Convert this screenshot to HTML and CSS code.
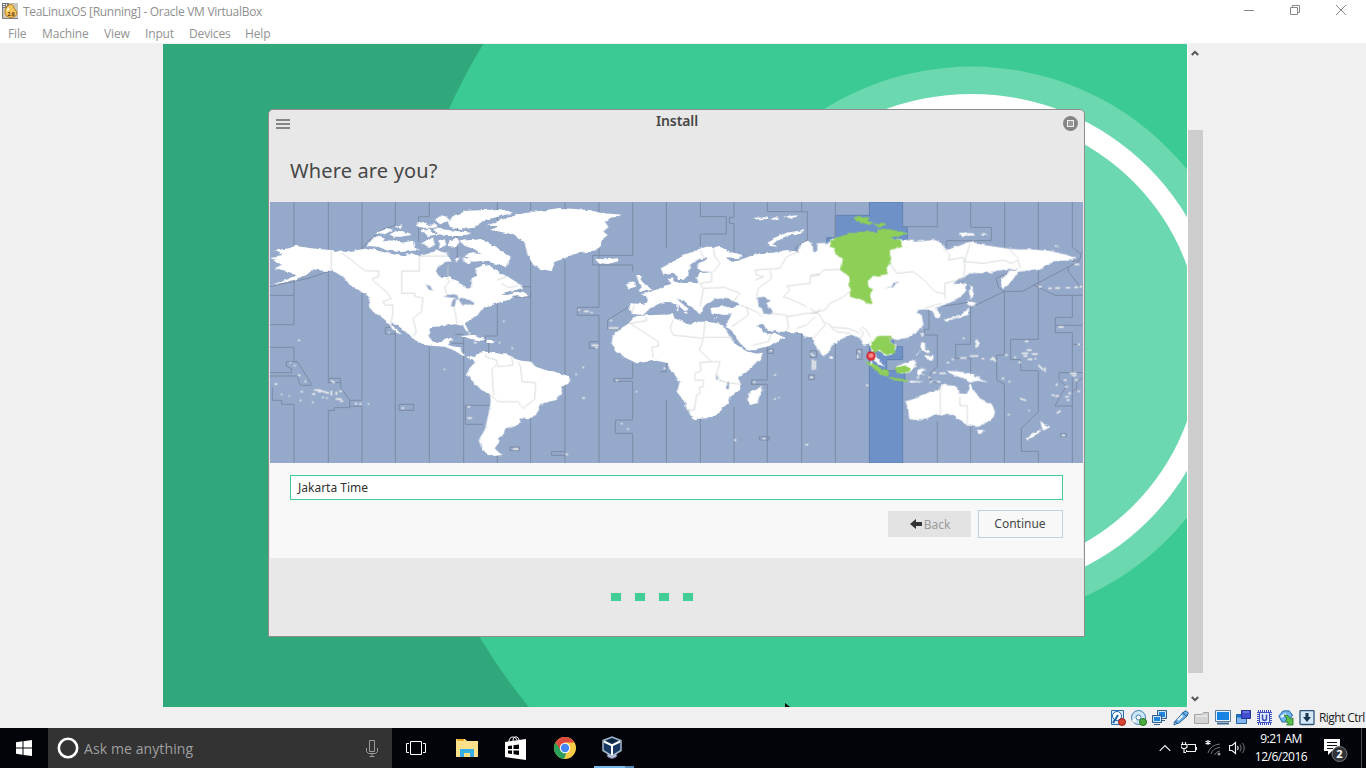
FILE: index.html
```html
<!DOCTYPE html>
<html lang="en">
<head>
<meta charset="utf-8">
<title>TeaLinuxOS [Running] - Oracle VM VirtualBox</title>
<link rel="stylesheet" href="styles.css">
</head>
<body>
<header class="titlebar">
  <svg class="app-icon" width="16" height="16" viewBox="0 0 16 16"><rect width="16" height="16" fill="#c9c6bd"/><path d="M0 0H7V5H0Z" fill="#777"/><path d="M1 1h2v1H1zM4 1h1v2H4zM1 3h2v1H1z" fill="#eee"/><path d="M3 9Q3 4 7 2Q11 0 12 5Q15 8 15 11Q14 14 9 14.500Q3 14 3 9Z" fill="#f6c65c" stroke="#b98222"/><path d="M5 8L7 5" stroke="#fff3bd" stroke-width="2"/><path d="M.5 5V15.500H16" fill="none" stroke="#807b70"/><text x="5.500" y="12.500" class="app-ver">2.6</text></svg>
  <span class="title-text">TeaLinuxOS [Running] - Oracle VM VirtualBox</span>
  <div class="caption">
    <svg width="12" height="12"><path d="M1 6.500H11" /></svg>
    <svg width="12" height="12"><path d="M1.500 3.500H8.500V10.500H1.500ZM3.500 3.500V1.500H10.500V8.500H8.500"/></svg>
    <svg width="12" height="12"><path d="M1 1L11 11M11 1L1 11"/></svg>
  </div>
</header>
<nav class="menubar"><span class="m-file">File</span><span class="m-machine">Machine</span><span class="m-view">View</span><span class="m-input">Input</span><span class="m-devices">Devices</span><span class="m-help">Help</span></nav>
<main class="viewport">
  <section class="desktop">
    <svg class="wallpaper" width="1024" height="663"><rect width="1024" height="663" fill="#30a87c"/><circle cx="807" cy="299.600" r="571.500" fill="#3bca94"/><circle cx="808.500" cy="299.600" r="277" fill="#6bd8af"/><circle cx="808.500" cy="300" r="250" fill="#fff"/><circle cx="808.500" cy="299.600" r="229" fill="#6bd8af"/></svg>
    <section class="installer">
      <div class="win-head">
        <svg width="14" height="11"><path d="M0 1H14M0 5H14M0 9H14" stroke="#858585" stroke-width="2"/></svg>
        <span class="win-title">Install</span>
        <svg width="15" height="15"><circle cx="7.500" cy="7.500" r="7.500" fill="#858585"/><rect x="4.500" y="4.500" width="6" height="6" fill="#999" stroke="#f0f0f0"/></svg>
      </div>
      <h1 class="question">Where are you?</h1>
      <svg class="map" width="813" height="261" viewBox="6 6 2439 783" preserveAspectRatio="none">
        <defs>
          <filter id="coast" x="-5%" y="-5%" width="110%" height="110%"><feTurbulence type="fractalNoise" baseFrequency="0.055" numOctaves="2" seed="4"/><feDisplacementMap in="SourceGraphic" scale="11" xChannelSelector="R" yChannelSelector="G"/></filter>
        </defs>
        <rect width="2450" height="795" fill="#95a9ca"/>
        <!-- highlighted time zone -->
        <g transform="translate(1626)" fill="#6e92c8" stroke="#5473a6" stroke-width="2"><path d="M76 46H178V6H278V80H292V115L240 200H90L50 128V113H76ZM178 410H250V430L258 440H278V479H230V512H258V498H285V540H278V789H178Z"/></g>
        <!-- zone boundaries -->
        <g class="zones">
          <path d="M78 6V286H6M6 374H78V286M6 442H78V485M55 485H88L128 548V556H97L88 528H6M6 518H71V506L55 499V485M13 562V601H41V613H78V789M181 6V535H218V562L245 601V623H199V631H181V789M181 535V548H218M282 6V601H245M245 619H282V789M382 6V75L340 90 300 125 282 145M382 382V789M382 382H352V402H382M393 613H437V631H393ZM484 6V50H452V125M484 440V789M562 403H587V430H550M587 430V789M688 6V90M688 220V408H652V425L662 430V460M688 765V789M788 6V262M788 275V485M788 650V789M668 616H592V673H645M726 741H755V752H726ZM568 38V175M6 260L120 235 181 215M760 260H788V291H740"/>
          <g transform="translate(816)"><path d="M75 6V175M75 180V789M177 6V322H112V346H177V789M148 425H177M148 425V445H177M278 6V166H158V195H278V215M270 318L203 360V387H240M278 390V485M278 490V535H221V544H278V660H226V700H278V789M75 755H35V766H75M379 6V145M379 250V300M379 485V515H361M379 600V789M481 6V50H559V102H481V140M481 655V789M582 6V52H568V70H582V160M582 620V789M682 6V35H802V120L768 140V155M682 430V460M700 447H682V460H700ZM682 455V540H634V553H682V789M658 710H688V720H658ZM785 6V35M785 395V789M811 452H830V472H811ZM806 525H823V539H806Z"/></g>
          <g transform="translate(1626)"><path d="M76 6V115M76 430V789M140 448H156V478H140ZM278 80H382V6M482 6V82H544V122H410V140M584 6V145M685 6V150M787 6V142L812 162V175L787 185M775 200V215L808 257V262M810 162L817 155M810 182L637 274H583L482 323V433H437V475H482V515M583 274V465H560V540L583 552V789M625 205L558 235 565 262 583 274M670 255L735 286H817M787 286V352H736V398H787V789M736 376H817M787 433H817M685 200V418H602V479H632V512H685V635L634 685V754H685V789M747 518H817M747 518V540L770 560 755 580 735 618H787M817 535L800 545V565L787 575M482 323V305L445 312 400 318M357 330V388H344V405H382V500L360 520V540L382 550M382 665V789M482 675V789M752 701H769V710H752Z"/></g>
        </g>
        <!-- land masses -->
        <g class="land" filter="url(#coast)">
          <path d="M16 152L50 147 85 138 130 145 160 148 190 150 222 156 270 150 300 145 330 152 360 160 400 167 430 160 455 168 485 160 510 150 530 158 545 170 550 185 530 185 510 200 503 215 515 230 545 232 570 245 600 266 612 260 610 235 625 228 622 205 650 195 680 205 700 222 712 225 735 240 760 255 765 265 740 270 715 275 700 282 720 285 740 275 765 278 782 288 760 292 735 285 730 296 700 305 680 312 660 318 640 330 625 350 598 365 592 375 602 392 596 395 585 378 560 373 530 378 500 380 485 388 482 405 490 420 505 428 525 425 530 415 550 413 552 420 540 435 560 440 578 442 580 455 592 470 610 468 624 474 605 476 580 465 560 452 530 440 500 438 470 435 440 420 430 410 400 385 370 366 372 375 402 404 385 398 370 380 358 365 345 355 315 335 303 320 305 295 300 285 275 270 250 258 230 235 205 218 190 212 165 212 135 208 115 225 90 235 60 245 12 254 60 238 85 222 55 215 45 210 20 205 40 195 15 180 30 175 50 172 12 178 10 170 45 165Z"/>
          <path d="M296 138L320 108 350 115 345 125 370 118 400 128 435 122 440 145 455 150 400 156 360 152 330 140ZM325 98L360 85 375 90 350 103ZM365 103L385 92 410 95 432 104 400 110 375 110ZM378 80L402 73 400 83ZM440 72L470 65 480 75 505 72 508 82 470 84ZM455 95L485 85 490 98 520 102 480 108ZM460 130L495 112 500 130 480 145ZM500 85L540 90 610 98 590 108 530 108 505 98ZM495 58L535 48 545 62 520 70ZM560 45L600 32 700 28 735 38 690 50 650 60 620 80 570 85 540 70ZM540 65L560 60 600 75 580 90 545 80ZM545 120L565 115 575 125 565 140 540 138ZM575 122L640 118 690 145 728 170 722 185 712 200 685 192 650 182 615 185 590 165 615 160 640 162 620 148 590 138ZM510 125L530 118 535 135 515 145ZM585 172L615 180 605 192 580 190ZM560 178L573 172 572 188ZM575 408L610 405 652 418 640 422 600 415ZM655 422L680 424 675 430 655 428ZM230 225L260 245 300 278 280 275 240 248Z"/>
          <path d="M620 472L628 460 655 455 680 458 700 462 730 465 745 478 760 482 790 485 803 500 840 512 856 514 901 528 908 540 896 552 882 560 880 580 866 600 841 605 816 616 810 635 795 650 780 658 758 655 760 668 735 682 710 690 705 705 690 715 695 725 680 745 700 765 680 768 655 760 640 745 632 720 650 690 655 670 662 640 668 600 665 582 640 570 620 550 600 530 595 518 610 500 622 485 610 475Z"/>
          <g transform="translate(816)">
            <path d="M-160 78L-120 60 -60 42 0 32 60 24 150 30 180 38 245 44 210 55 195 65 205 80 190 95 203 105 185 120 180 140 170 150 130 158 100 162 75 175 45 185 35 214 0 206 -20 195 -35 170 -48 125 -80 103 -150 90 -120 78ZM165 176L200 178 232 175 235 183 205 192 180 190Z"/>
            <path d="M270 310L310 312 325 305 320 292 300 283 318 280 340 272 365 262 390 252 385 235 400 232 400 245 425 250 455 248 475 250 470 232 480 220 518 216 480 214 472 205 475 190 500 180 495 175 475 178 450 198 445 225 430 240 415 240 400 218 370 222 362 205 400 185 430 165 465 150 500 140 540 140 570 155 608 165 600 175 560 172 575 188 600 180 625 170 660 160 700 158 740 150 775 155 785 130 805 122 818 140 812 160 860 150V450L840 440 825 425 818 410 805 412 785 400 750 396 715 395 685 390 665 372 650 375 685 405 700 400 735 410 715 425 680 440 625 452 600 430 575 395 550 375 560 380 565 355 575 342 555 345 515 340 512 325 530 320 550 318 580 320 600 318 585 305 555 295 530 298 515 305 495 315 488 325 480 345 470 330 450 318 430 300 412 298 425 310 445 325 440 335 415 318 385 305 360 310 330 325 310 345 275 342 268 330Z"/>
            <path d="M290 348L340 345 400 343 402 355 430 365 450 375 465 365 500 365 545 372 560 395 590 435 622 455 640 462 672 458 665 475 630 505 598 530 600 570 568 590 565 605 550 620 535 640 500 655 458 658 440 625 430 600 410 575 420 545 400 520 388 510 385 490 350 482 320 485 290 490 250 470 225 450 215 430 218 405 245 385 270 365 285 350ZM665 558L668 572 650 610 630 615 622 600 630 580ZM288 226L305 228 302 240 328 260 338 265 325 272 295 272 305 262 298 250ZM262 252L285 245 288 260 265 266ZM680 130L700 115 740 98 790 90 792 96 740 108 710 122 700 132 712 140 690 138ZM640 53L680 52 685 57 650 58ZM690 58L705 52 720 54 705 59ZM730 50L770 46 770 51 740 55ZM432 337L445 335 440 342ZM410 318L415 318 415 330 408 330ZM520 352L535 350 528 355Z"/>
          </g>
          <g transform="translate(1626)">
            <path d="M-20 125L5 128 10 155 18 158 20 130 55 128 65 120 100 115 280 118 320 125 375 120 390 128 410 150 440 140 480 125 520 135 590 145 620 148 660 148 720 153 770 165 800 175 780 182 740 182 715 195 690 205 655 212 625 215 600 250 578 268 570 240 600 212 625 205 580 208 540 218 480 220 440 240 430 252 470 250 468 275 440 300 400 315 375 325 392 340 390 352 375 350 365 330 345 328 325 330 320 340 335 345 340 375 325 395 295 412 265 420 245 415 238 422 258 440 250 462 232 467 215 458 200 450 190 445 192 460 215 490 222 500 205 495 190 475 182 440 178 430 160 435 150 415 130 405 110 408 85 425 60 440 55 460 42 470 25 450 12 430 5 410 -20 410Z"/>
            <path d="M480 252L492 280 485 300 478 280ZM470 303L500 308 480 320ZM478 322L475 345 445 352 410 365 400 358 440 350 465 335ZM335 398L343 400 335 412ZM330 430L345 430 345 448 360 452 355 460 335 450ZM345 468L370 465 370 478 350 478ZM318 465L335 450 320 468ZM258 500L280 490 315 478 318 490 300 520 265 518ZM322 508L350 505 332 515 348 528 335 522 325 530ZM360 545L378 540 360 550ZM300 542L345 545 300 548ZM408 512L450 515 490 522 515 540 535 548 505 542 480 548 460 535 430 525ZM498 415L508 430 500 445ZM287 605L330 590 360 575 385 568 400 555 440 558 445 580 470 582 480 552 495 575 510 595 545 612 555 635 550 655 525 672 500 678 465 672 440 655 430 645 380 645 350 655 310 660 297 655 295 630ZM500 690L522 690 510 704ZM690 662L705 674 722 680 700 692ZM695 686L680 705 655 718 648 714ZM448 98L495 100 495 106 450 108ZM510 102L536 104 520 108ZM730 136L750 136 735 141ZM60 465L70 470 68 480 58 475Z"/>
          </g>
        </g>
        <!-- green regions in the selected zone -->
        <g transform="translate(1626)" fill="#8ecf58" filter="url(#coast)"><path d="M62 120L105 105 150 95 200 96 205 85 240 88 290 98 285 105 240 112 272 120 280 140 240 150 240 190 232 200 230 222 185 232 172 245 178 260 190 265 180 285 185 305 182 313 165 305 120 290 118 230 90 210 95 180 72 155 75 145 55 140 60 130ZM130 50L180 52 170 60 195 68 175 75 140 62ZM195 72L220 68 230 74 200 80ZM180 425L210 408 240 407 243 415 238 422 258 440 255 458 232 467 210 452 192 458 185 440ZM162 480L185 488 215 508 237 515 235 530 215 525 185 500ZM235 532L295 538 292 546 240 540ZM256 502L290 496 302 510 295 518 265 520Z"/></g>
        <!-- inland waters -->
        <g fill="#95a9ca" filter="url(#coast)"><path d="M525 290L548 280 575 288 570 296 545 292ZM552 298L565 296 560 320 550 318ZM578 293L605 300 620 310 585 318 572 300ZM472 250L485 255 495 272 485 268ZM535 185L560 195 575 175 600 195 612 205 612 235 560 225 540 210Z"/><path d="M1324 314L1340 295 1360 300 1371 292 1381 300 1406 310 1396 320 1366 318 1341 322ZM1465 293L1488 290 1505 298 1495 310 1512 330 1508 343 1490 342 1476 322ZM1343 522L1353 540 1370 545 1345 540ZM1378 545H1383V566H1377ZM1848 266L1870 258 1888 240 1884 256Z"/></g>
        <!-- inland zone borders -->
        <g class="inner">
          <path d="M190 150V212M220 158L250 180 290 212 332 213V230L315 235V242L355 275 370 295 345 305 350 315H374V345L368 370M454 168V213H401V280H440V288L465 295 460 335 435 355 445 395 435 410M454 168H541V155M541 195L538 235 545 245 530 260 538 290M557 320L562 340 568 375M688 240L715 230M700 250L720 262 750 258M655 460L652 470 685 480 690 500 735 495 730 465M685 495L672 508 675 560 678 585M668 585L690 605 750 605 765 625 800 598 803 548 762 545 758 500 750 485"/>
          <path transform="translate(816)" d="M270 370L320 362 318 350M270 370L355 425V438L335 442 340 475M400 358L390 385 400 405 490 415 495 365M495 412H580M490 418L478 450 500 470 515 485H540L530 520 540 540 560 548 600 552M515 485L480 488 483 512 465 520V540H490V560L478 562 480 580 470 585 463 630H440M480 150L495 180M520 145L525 170 540 190 520 215M515 215V245L480 250 490 270 480 320M490 265L555 262 600 280 580 305M775 155L740 170 720 205 645 210 650 225 670 230 645 240M690 212L695 235 655 265 650 290M840 225L810 230V250L740 258 750 270 730 290 770 305 800 320M600 315L650 335 665 350M620 320L625 345 575 380M690 340L740 345 745 380 740 395M740 350L800 340 830 340 840 325M825 350L800 375 770 385M695 400L685 425 640 435M283 315L275 340"/>
          <path transform="translate(1626)" d="M0 225L30 222 40 210 90 208M118 275L100 290 60 310 45 330 0 340M0 325L30 345 45 375 10 415M45 365L70 382 115 385 150 400M60 380L80 395 120 400M150 385L160 400 150 420M180 410L170 390 155 380M240 190L260 220 310 215 340 238 375 275 405 282V295M400 145L420 165 415 180 460 172 465 200 460 235 405 250V280M480 130L470 165 465 185 520 190 580 180 605 190 625 180 630 205M600 150L625 175M391 560V645M450 590V617H472V675M230 410L250 420M345 325L375 315 395 310"/>
        </g>
        <!-- small islands -->
        <g class="isles">
          <path d="M90 421h6M65 488h4M78 497h5M90 526h7M110 544h5M20 552h8M97 575h8M39 583h4M62 588h4M95 601h5M132 607h5M132 582h10M190 542l10 7M138 570h20M150 575h10M158 572l25 8M190 572v14M205 575v10M214 574h8M203 597h18M216 603h9M162 592h5M174 594h5M260 611h8M274 612h6M299 612h5M401 624h7M598 620h9M598 654h14M735 747h16M705 364h5M528 508h4M617 428h10M692 428h5M600 400h8M730 445h5M360 398h5"/>
          <path transform="translate(816)" d="M114 330h6M132 334h15M152 338h6M155 436h20M165 443h9M127 502h5M106 523h5M127 594h8M228 541h6M287 575h5M242 671h6M261 687h5M210 361h6M206 384h30M77 763h7M370 505h7M690 452h7M640 546h6M702 525h6M702 597h6M715 593h4M668 716h8M582 720h7M795 734h10M811 460l12 8M818 478v32M826 482v26M810 532h9"/>
          <path transform="translate(1626)" d="M145 452l6 6M143 465v10M9 480v30M168 556h7M310 499h10M368 518h10M388 520h20M410 488h8M425 478h6M450 474h20M480 468h25M515 476h8M458 415h6M500 420v22M540 478h16M547 471l10 14M585 465h8M612 472h6M645 424h10M635 460h20M640 468h12M650 450h15M653 478h14M665 462h18M673 476h6M625 487h8M685 495l15 15M705 502v14M575 535h8M595 545h6M630 595l18 6M654 632h5M593 644h6M780 520h20M785 527h14M762 540h8M795 540h8M740 550v8M765 560h9M775 580h8M765 590h12M770 600h8M725 585h8M735 588h12M803 574h7M740 640l12-8M755 706h10M745 381h16M803 433h8M685 260h10M715 265h10M735 264h15M767 263h14M793 262h11M808 260h9M793 193h15M320 532h8M355 532h6M380 545h12"/>
        </g>
        <!-- location pin -->
        <g transform="translate(1809 468)"><path d="M1 8V25" stroke="#fff" stroke-width="4"/><circle r="12" fill="#ea3b43" stroke="#c3191f" stroke-width="3.500"/><ellipse cy="-2" rx="7.500" ry="6" fill="#f7a2a5"/><path d="M-6-2H6" stroke="#ea5a60" stroke-width="2"/></g>
      </svg>
      <div class="form">
        <div class="field">Jakarta Time</div>
        <div class="buttons">
          <div class="btn back"><svg width="12" height="10"><path d="M0 5L6 0V3H12V7H6V10Z" fill="#333"/></svg><span>Back</span></div>
          <div class="btn continue">Continue</div>
        </div>
      </div>
      <div class="dots"><i></i><i></i><i></i><i></i></div>
    </section>
    <svg class="pointer" width="5" height="5"><path d="M0 0L5 4V5H0Z"/></svg>
  </section>
  <aside class="scroll">
    <svg width="8" height="6"><path d="M.8 5L4 1.800 7.200 5" /></svg>
    <div class="thumb"></div>
    <svg width="8" height="6"><path d="M.8 1L4 4.200 7.200 1"/></svg>
  </aside>
</main>
<footer class="status">
  <svg viewBox="0 0 16 16"><path d="M1.500.500H13.500V14.500H1.500Z" fill="#d9ebfa" stroke="#2d70ae"/><circle cx="7" cy="6" r="4.500" fill="#fff" stroke="#1d66ad"/><path d="M3 13L8 5" stroke="#1d66ad" stroke-width="2"/><circle cx="12" cy="12" r="3.500" fill="#da4436" stroke="#951d17"/></svg>
  <svg viewBox="0 0 16 16"><circle cx="7.500" cy="7.500" r="7" fill="#cce5f7" stroke="#3b7eb8"/><path d="M7 7L1 10 3 13Z" fill="#fff"/><circle cx="7.500" cy="7.500" r="2.500" fill="#fff" stroke="#3b7eb8"/><circle cx="12" cy="12" r="3.500" fill="#4cae3e" stroke="#297322"/></svg>
  <svg viewBox="0 0 16 16"><path d="M5.500.500H14.500V8.500H5.500ZM8 10.500H13" fill="#1f86de" stroke="#355f8a"/><path d="M6.500 1.500H13.500V7.500H6.500Z" fill="none" stroke="#cde7fc"/><path d="M.5 5.500H9.500V12.500H.5ZM2 14.500H8" fill="#1f86de" stroke="#355f8a"/><path d="M1.500 6.500H8.500V11.500H1.500Z" fill="none" stroke="#cde7fc"/></svg>
  <svg viewBox="0 0 16 16"><path d="M1 15L1.500 11.500 4 13.500Z" fill="#d9e6f2" stroke="#245f9c"/><path d="M2.500 11L10 2.500 13 .700 15.300 3 14 6 5.500 13.500Q3 14 2.500 11Z" fill="#6eb0ea" stroke="#245f9c"/><path d="M9.500 2.500L14 6.500" stroke="#1f568f"/><path d="M5 10L9.500 5.500" stroke="#e8f5ff" stroke-width="2"/></svg>
  <svg viewBox="0 0 16 16"><path d="M.5 13.500V4.500H8L9.500 2.500H14.500V13.500Z" fill="#d3d3d3" stroke="#a4a4a4"/><path d="M2 6H13" stroke="#f5f5f5"/></svg>
  <svg viewBox="0 0 16 16"><path d="M.5.500H15.500V11.500H.5Z" fill="#e7f1fa" stroke="#5c7c9b"/><path d="M2 2H14V10H2Z" fill="#1682e2"/><path d="M2 13.500H14" stroke="#456b94" stroke-width="2"/></svg>
  <svg viewBox="0 0 16 16"><path d="M.5 4.500H10.500V13.500H.5Z" fill="#83b7eb" stroke="#235f9d"/><path d="M5.500.500H14.500V8.500H5.500Z" fill="#414fcf" stroke="#263394"/><path d="M1 6H5" stroke="#1b70c9" stroke-width="3"/><path d="M7 2H13" stroke="#8ea0f5"/></svg>
  <svg viewBox="0 0 16 16"><rect x="1" y="1" width="13" height="13" fill="none" stroke="#3d51c2" stroke-width="2" stroke-dasharray="1 1"/><rect x="2.500" y="2.500" width="10" height="10" fill="#e5ebff" stroke="#3d51c2"/><path d="M5.500 4.500V8Q5.500 10.500 7.500 10.500T9.500 8V4.500" fill="none" stroke="#3950bd" stroke-width="1.600"/></svg>
  <svg viewBox="0 0 16 16"><path d="M.8 6L5 1 11 .800 14.500 5 11 12 4 12Z" fill="#6eb3ee" stroke="#2768a2"/><path d="M3 7L8 4" stroke="#e9f7ff" stroke-width="2.500"/><path d="M6 5L9.500 5.500 14 9.500 15 8V15H8.500L10.500 13 7.500 10.500 9 9Z" fill="#55c04a" stroke="#276e24" stroke-width=".8"/></svg>
  <svg viewBox="0 0 16 16"><rect x="1" y=".5" width="14" height="14" rx="1" fill="#d5e8f8" stroke="#2e5577" stroke-width="1.300"/><path d="M6.500 3H9.500V7H12L8 12 4 7H6.500Z" fill="#18344e"/></svg>
  <span class="hostkey">Right Ctrl</span>
</footer>
<footer class="taskbar">
  <div class="start"><svg width="16" height="16"><path d="M0 2.300L6.500 1.300V7.500H0ZM7.500 1.200L16 0V7.500H7.500ZM0 8.500H6.500V14.700L0 13.800ZM7.500 8.500H16V16L7.500 14.900Z" fill="#fff"/></svg></div>
  <div class="search"><svg width="22" height="22"><circle cx="11" cy="11" r="9.200" fill="none" stroke="#fff" stroke-width="2.600"/></svg><span>Ask me anything</span><svg class="mic" width="12" height="17"><path d="M3.500.500H8.500V11.500H3.500ZM.5 8V11.500L2.500 13.500H9.500L11.500 11.500V8M6 13.500V16M3.500 16.500H8.500" fill="none" stroke="#9b9b9b"/></svg></div>
  <div class="apps">
    <svg width="20" height="14"><path d="M4.500.500H15.500V13.500H4.500ZM3 2.500H.5V11.500H3M17 2.500H19.500V11.500H17" fill="none" stroke="#fff"/></svg>
    <svg width="22" height="20"><path d="M0 1H9L11 3H22V19H0Z" fill="#fce08a"/><path d="M1 1H8V3H1Z" fill="#e9ac2f"/><path d="M4 19V11H18V19H14V15H8V19Z" fill="#38afe4"/></svg>
    <svg width="22" height="24"><path d="M0 6L21 3V24L0 21Z" fill="#fff"/><path d="M4 6Q4 1 8 1Q11 1 12 4M8 5Q8 0 12 1Q14 2 14 4" fill="none" stroke="#fff"/><path d="M3 10L7 9.500V13H3ZM8.500 9.300L14 8.600V13H8.500ZM3 14.500H7V18L3 17.500ZM8.500 14.500H14V19L8.500 18.200Z" fill="#000"/></svg>
    <svg width="22" height="22"><circle cx="11" cy="11" r="11" fill="#fbcd47"/><path d="M1.500 5.500A11 11 0 0 1 20.500 5.500H11L6.200 13.700Z" fill="#dc4b3e"/><path d="M1.500 5.500L6.800 13.500 11 16.500 12.500 16 10 22A11 11 0 0 1 1.500 5.500Z" fill="#2ba05b"/><circle cx="11" cy="11" r="5.200" fill="#fff"/><circle cx="11" cy="11" r="4.200" fill="#4486f3"/></svg>
    <svg width="20" height="24"><path d="M10 17Q3 18 6 21Q10 24 14 21Q17 18 10 17" fill="#c6cadf" stroke="#5f6784"/><path d="M1 4.500L10 1 19 4.500V14.500L10 20 1 14.500Z" fill="#193a60" stroke="#a5b5cc" stroke-width="1.500"/><path d="M2 5.500L10 9.500 18 5.500M10 9.500V19" fill="none" stroke="#fff" stroke-width="2"/><path d="M5 4.500L10 2.500 15 4.500 10 7Z" fill="#0d2542"/></svg>
  </div>
  <div class="running"></div>
  <div class="tray">
    <svg width="12" height="8"><path d="M.7 6.800L6 1.500 11.300 6.800" class="line"/></svg>
    <svg width="16" height="12"><path d="M7 2.500H14.500V9.500H5.500V8M15.500 4.500V7.500" class="line crisp"/><path d="M0 2.500H6V5L4.500 6.500H1.500L0 5ZM3 6.500V10.500H5M1.500 0V2.500M4.500 0V2.500" class="line"/></svg>
    <svg width="16" height="16"><path d="M3 0V5M.5 1L5.500 4M5.500 1L.5 4" class="line"/><path d="M3 13Q5 5 15 4M6 14Q8 8 15 7.500M9.500 15Q11 11.500 15 11" fill="none" stroke="#747474"/><circle cx="14" cy="14" r="1.500" fill="#999"/></svg>
    <svg width="17" height="14"><path d="M.5 4.500H3L6.500 1.500V12.500L3 9.500H.5Z" class="line"/><path d="M8.500 5Q10 7 8.500 9" class="line"/><path d="M11 3.500Q13.500 7 11 10.500M13.500 2Q17 7 13.500 12" fill="none" stroke="#777"/></svg>
    <div class="clock"><span>9:21 AM</span><span>12/6/2016</span></div>
    <svg class="notice" width="26" height="26"><path d="M1 2H17V14H9L5 18V14H1Z" fill="#fff"/><path d="M4 5.500H14M4 8.500H14M4 11.500H10" stroke="#111"/><circle cx="16.500" cy="17" r="7.500" fill="#303236" stroke="#75777a"/><text x="13.300" y="21">2</text></svg>
  </div>
</footer>
</body>
</html>
```

FILE: styles.css
```css
* { box-sizing: border-box; }
body { margin: 0; width: 1366px; height: 768px; overflow: hidden; background: #f0f0f0; font-family: "Open Sans", "Noto Sans", sans-serif; display: flex; flex-direction: column; }
svg { display: block; flex: none; }
span { white-space: nowrap; }
.titlebar { height: 23px; background: #fff; display: flex; align-items: flex-start; padding: 3px 18px 0 2px; color: #8f8f8f; font-size: 12px; line-height: 18px; }
.app-ver { font: bold 5px "Open Sans", sans-serif; fill: #5b3000; }
.title-text { margin: 0 0 0 5px; letter-spacing: -.3px; }
.caption { display: flex; gap: 34px; margin: 1px 1px 0 auto; }
.caption path { fill: none; stroke: #888; }
.menubar { height: 20px; background: #fff; display: flex; padding-left: 8px; color: #929292; font-size: 12px; line-height: 22px; letter-spacing: -.15px; }
.menubar span { flex: none; }
.m-file { width: 34px; }
.m-machine { width: 62px; }
.m-view { width: 41px; }
.m-input { width: 44px; }
.m-devices { width: 56px; }
.viewport { height: 664px; display: flex; padding: 1px 0 0 163px; }
.desktop { width: 1024px; height: 663px; position: relative; overflow: hidden; }
.wallpaper { position: absolute; inset: 0; }
.installer { position: absolute; left: 105px; top: 65px; width: 817px; height: 528px; border: 1px solid #8d8d8d; border-radius: 5px 5px 0 0; background: #e8e8e8; padding: 0 1px; font-family: "Noto Sans", sans-serif; color: #474747; overflow: hidden; }
.win-head { height: 38px; padding: 6px 5px 0 6px; display: flex; justify-content: space-between; align-items: flex-start; }
.win-head svg:first-child { margin-top: 3px; }
.win-title { font-size: 14px; font-weight: 600; line-height: 16px; margin: -3px -1px 0 0; letter-spacing: -.1px; }
.question { margin: 0; height: 54px; padding: 8px 0 0 20px; font-size: 20px; font-weight: 400; line-height: 30px; letter-spacing: .15px; }
.map { width: 813px; height: 261px; }
.zones { fill: none; stroke: #7c8ba5; stroke-width: 3; }
.land { fill: #fff; }
.inner { fill: none; stroke: #c6cdca; stroke-width: 2.2; }
.isles { fill: none; stroke: #e9eceb; stroke-width: 5; }
.form { height: 95px; background: #f8f8f8; padding: 12px 20px 0; font-size: 12px; }
.field { height: 25px; border: 1px solid #43cc94; background: #fff; padding-left: 7px; line-height: 23px; color: #333; }
.buttons { margin-top: 10px; display: flex; justify-content: flex-end; align-items: flex-start; gap: 7px; }
.btn { display: flex; align-items: center; justify-content: center; }
.back { width: 83px; height: 26px; margin-top: 1px; padding-left: 1px; background: #e3e3e3; color: #9b9b9b; gap: 2px; }
.continue { width: 85px; height: 28px; border: 1px solid #bfd1dd; padding: 0 1px 2px 0; }
.dots { display: flex; gap: 14px; padding: 35px 0 0 341px; }
.dots i { width: 10px; height: 8px; background: #43cd96; }
.pointer { position: absolute; left: 622px; top: 659px; }
.scroll { width: 17px; height: 663px; border-left: 1px solid #fff; display: flex; flex-direction: column; align-items: center; padding: 6px 2px 5px 0; }
.scroll path { fill: none; stroke: #555; stroke-width: 2; }
.thumb { width: 15px; height: 543px; background: #cdcdcd; margin: 74px 0 auto; flex: none; }
.status { height: 21px; display: flex; align-items: center; justify-content: flex-end; gap: 5px; padding-right: 1px; }
.status svg { width: 16px; height: 16px; }
.hostkey { width: 46px; font-size: 12px; line-height: 19px; color: #222; letter-spacing: -.58px; margin-left: -1px; }
.taskbar { height: 40px; background: #02040a; display: flex; position: relative; }
.start { width: 48px; display: grid; place-items: center; }
.search { width: 344px; background: #333; display: flex; align-items: center; padding: 0 14px 0 9px; color: #9f9f9f; font-size: 14px; }
.search span { margin: 0 auto 0 5px; letter-spacing: .1px; }
.apps { display: flex; align-items: center; padding-left: 14px; }
.apps svg:nth-child(2) { margin-left: 30px; }
.apps svg:nth-child(3) { margin-left: 27px; }
.apps svg:nth-child(4) { margin-left: 27px; }
.apps svg:nth-child(5) { margin-left: 26px; }
.running { position: absolute; left: 594px; top: 38px; width: 40px; height: 2px; background: linear-gradient(90deg, #76b9ed 31px, #5488b4 31px); }
.tray { margin-left: auto; width: 207px; display: flex; align-items: center; border-right: 1px solid #4a4c50; margin-right: 4px; padding-left: 4px; }
.tray svg:nth-child(2) { margin-left: 10px; }
.tray svg:nth-child(3) { margin-left: 8px; }
.tray svg:nth-child(4) { margin-left: 8px; }
.line { fill: none; stroke: #f2f2f2; stroke-width: 1.2; }
.crisp { shape-rendering: crispEdges; }
.clock { width: 62px; margin-left: 4px; text-align: center; color: #fff; font-size: 12px; line-height: 18px; letter-spacing: -.5px; display: flex; flex-direction: column; }
.tray .notice { margin: 4px 0 0 11px; }
.notice text { font: bold 11px "Open Sans", sans-serif; fill: #fff; }
```
